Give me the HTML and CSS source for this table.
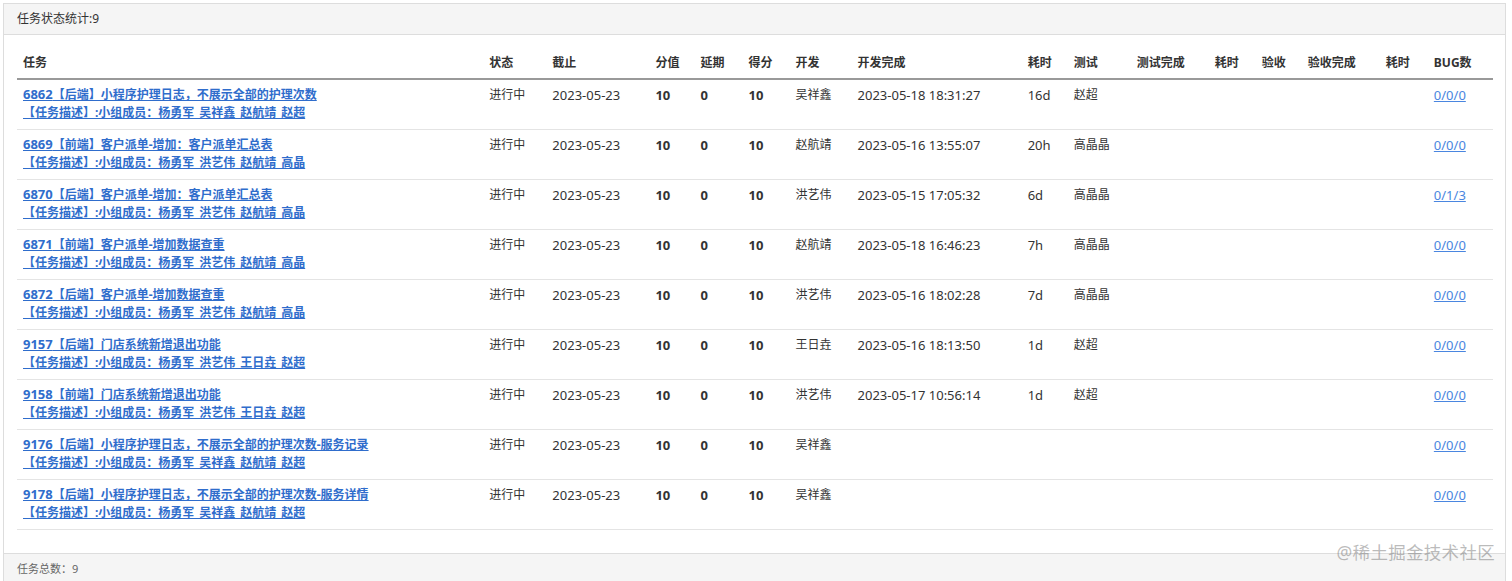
FILE: index.html
```html
<!DOCTYPE html>
<html lang="zh-CN">
<head>
<meta charset="utf-8">
<title>任务状态统计</title>
<link rel="stylesheet" href="styles.css">
</head>
<body>
<div class="panel">
  <div class="panel-heading">任务状态统计:9</div>
  <div class="panel-body">
    <table class="task-table">
      <colgroup>
        <col class="c-task"><col class="c-status"><col class="c-due"><col class="c-score">
        <col class="c-delay"><col class="c-got"><col class="c-dev"><col class="c-devdone">
        <col class="c-t1"><col class="c-test"><col class="c-testdone"><col class="c-t2">
        <col class="c-acc"><col class="c-accdone"><col class="c-t3"><col class="c-bug">
      </colgroup>
      <thead>
        <tr>
          <th>任务</th><th>状态</th><th>截止</th><th>分值</th><th>延期</th><th>得分</th><th>开发</th><th>开发完成</th>
          <th>耗时</th><th>测试</th><th>测试完成</th><th>耗时</th><th>验收</th><th>验收完成</th><th>耗时</th><th>BUG数</th>
        </tr>
      </thead>
      <tbody>
        <tr>
          <td><a class="task-link" href="#"><span class="lat">6862</span>【后端】小程序护理日志，不展示全部的护理次数</a><a class="task-link" href="#">【任务描述】:小组成员：杨勇军_吴祥鑫_赵航靖_赵超</a></td>
          <td>进行中</td><td class="lat">2023-05-23</td><td class="num">10</td><td class="num">0</td><td class="num">10</td>
          <td>吴祥鑫</td><td class="lat">2023-05-18 18:31:27</td><td class="lat">16d</td><td>赵超</td><td></td><td></td><td></td><td></td><td></td>
          <td><a class="bug-link" href="#">0/0/0</a></td>
        </tr>
        <tr>
          <td><a class="task-link" href="#"><span class="lat">6869</span>【前端】客户派单-增加：客户派单汇总表</a><a class="task-link" href="#">【任务描述】:小组成员：杨勇军_洪艺伟_赵航靖_高晶</a></td>
          <td>进行中</td><td class="lat">2023-05-23</td><td class="num">10</td><td class="num">0</td><td class="num">10</td>
          <td>赵航靖</td><td class="lat">2023-05-16 13:55:07</td><td class="lat">20h</td><td>高晶晶</td><td></td><td></td><td></td><td></td><td></td>
          <td><a class="bug-link" href="#">0/0/0</a></td>
        </tr>
        <tr>
          <td><a class="task-link" href="#"><span class="lat">6870</span>【后端】客户派单-增加：客户派单汇总表</a><a class="task-link" href="#">【任务描述】:小组成员：杨勇军_洪艺伟_赵航靖_高晶</a></td>
          <td>进行中</td><td class="lat">2023-05-23</td><td class="num">10</td><td class="num">0</td><td class="num">10</td>
          <td>洪艺伟</td><td class="lat">2023-05-15 17:05:32</td><td class="lat">6d</td><td>高晶晶</td><td></td><td></td><td></td><td></td><td></td>
          <td><a class="bug-link" href="#">0/1/3</a></td>
        </tr>
        <tr>
          <td><a class="task-link" href="#"><span class="lat">6871</span>【前端】客户派单-增加数据查重</a><a class="task-link" href="#">【任务描述】:小组成员：杨勇军_洪艺伟_赵航靖_高晶</a></td>
          <td>进行中</td><td class="lat">2023-05-23</td><td class="num">10</td><td class="num">0</td><td class="num">10</td>
          <td>赵航靖</td><td class="lat">2023-05-18 16:46:23</td><td class="lat">7h</td><td>高晶晶</td><td></td><td></td><td></td><td></td><td></td>
          <td><a class="bug-link" href="#">0/0/0</a></td>
        </tr>
        <tr>
          <td><a class="task-link" href="#"><span class="lat">6872</span>【后端】客户派单-增加数据查重</a><a class="task-link" href="#">【任务描述】:小组成员：杨勇军_洪艺伟_赵航靖_高晶</a></td>
          <td>进行中</td><td class="lat">2023-05-23</td><td class="num">10</td><td class="num">0</td><td class="num">10</td>
          <td>洪艺伟</td><td class="lat">2023-05-16 18:02:28</td><td class="lat">7d</td><td>高晶晶</td><td></td><td></td><td></td><td></td><td></td>
          <td><a class="bug-link" href="#">0/0/0</a></td>
        </tr>
        <tr>
          <td><a class="task-link" href="#"><span class="lat">9157</span>【后端】门店系统新增退出功能</a><a class="task-link" href="#">【任务描述】:小组成员：杨勇军_洪艺伟_王日垚_赵超</a></td>
          <td>进行中</td><td class="lat">2023-05-23</td><td class="num">10</td><td class="num">0</td><td class="num">10</td>
          <td>王日垚</td><td class="lat">2023-05-16 18:13:50</td><td class="lat">1d</td><td>赵超</td><td></td><td></td><td></td><td></td><td></td>
          <td><a class="bug-link" href="#">0/0/0</a></td>
        </tr>
        <tr>
          <td><a class="task-link" href="#"><span class="lat">9158</span>【前端】门店系统新增退出功能</a><a class="task-link" href="#">【任务描述】:小组成员：杨勇军_洪艺伟_王日垚_赵超</a></td>
          <td>进行中</td><td class="lat">2023-05-23</td><td class="num">10</td><td class="num">0</td><td class="num">10</td>
          <td>洪艺伟</td><td class="lat">2023-05-17 10:56:14</td><td class="lat">1d</td><td>赵超</td><td></td><td></td><td></td><td></td><td></td>
          <td><a class="bug-link" href="#">0/0/0</a></td>
        </tr>
        <tr>
          <td><a class="task-link" href="#"><span class="lat">9176</span>【后端】小程序护理日志，不展示全部的护理次数-服务记录</a><a class="task-link" href="#">【任务描述】:小组成员：杨勇军_吴祥鑫_赵航靖_赵超</a></td>
          <td>进行中</td><td class="lat">2023-05-23</td><td class="num">10</td><td class="num">0</td><td class="num">10</td>
          <td>吴祥鑫</td><td></td><td></td><td></td><td></td><td></td><td></td><td></td><td></td>
          <td><a class="bug-link" href="#">0/0/0</a></td>
        </tr>
        <tr>
          <td><a class="task-link" href="#"><span class="lat">9178</span>【后端】小程序护理日志，不展示全部的护理次数-服务详情</a><a class="task-link" href="#">【任务描述】:小组成员：杨勇军_吴祥鑫_赵航靖_赵超</a></td>
          <td>进行中</td><td class="lat">2023-05-23</td><td class="num">10</td><td class="num">0</td><td class="num">10</td>
          <td>吴祥鑫</td><td></td><td></td><td></td><td></td><td></td><td></td><td></td><td></td>
          <td><a class="bug-link" href="#">0/0/0</a></td>
        </tr>
      </tbody>
    </table>
  </div>
  <div class="panel-footer">任务总数：9</div>
  <div class="watermark">@稀土掘金技术社区</div>
</div>
</body>
</html>
```
FILE: styles.css
```css
html, body {
  margin: 0;
  padding: 0;
  background: #ffffff;
}
body {
  font-family: "Noto Sans", "Noto Sans CJK SC", sans-serif;
  font-size: 12px;
  color: #333333;
}
.lat {
  font-size: 13px;
}
.task-link .lat {
  line-height: 1;
}
.panel {
  position: relative;
  margin: 3px 6px 0 3px;
  border: 1px solid #dddddd;
  border-bottom: none;
  background: #ffffff;
}
.panel-heading {
  height: 30px;
  line-height: 30px;
  padding: 0 13px;
  background: #f5f5f5;
  border-bottom: 1px solid #dddddd;
  color: #333333;
  font-size: 12px;
}
.panel-body {
  padding: 13px 12px 23px 13px;
}
.task-table {
  width: 100%;
  table-layout: fixed;
  border-collapse: collapse;
  border-spacing: 0;
}
.c-task { width: 466px; }
.c-status { width: 63px; }
.c-due { width: 103px; }
.c-score { width: 45px; }
.c-delay { width: 48px; }
.c-got { width: 47px; }
.c-dev { width: 62px; }
.c-devdone { width: 170px; }
.c-t1 { width: 46px; }
.c-test { width: 63px; }
.c-testdone { width: 78px; }
.c-t2 { width: 47px; }
.c-acc { width: 46px; }
.c-accdone { width: 78px; }
.c-t3 { width: 48px; }
.c-bug { width: 65px; }

.task-table th {
  text-align: left;
  font-weight: bold;
  padding: 6px 6px;
  height: 18px;
  line-height: 18px;
  border-bottom: 2px solid #999999;
  white-space: nowrap;
}
.task-table td {
  vertical-align: top;
  padding: 6px 6px 7px;
  line-height: 18px;
  height: 36px;
  border-bottom: 1px solid #e4e4e4;
  white-space: nowrap;
  overflow: visible;
}
.task-table td.num {
  font-weight: bold;
  font-size: 13px;
}
.task-link {
  display: block;
  height: 18px;
  color: #2f6dcc;
  font-weight: bold;
  text-decoration: underline;
}
.bug-link {
  color: #4a86e0;
  font-size: 13px;
  text-decoration: underline;
}
.panel-footer {
  height: 30px;
  line-height: 30px;
  padding: 0 13px;
  background: #f5f5f5;
  border-top: 1px solid #dddddd;
  color: #666666;
  font-size: 11px;
}
.watermark {
  position: absolute;
  right: 10px;
  bottom: 20px;
  font-size: 17.5px;
  line-height: 24px;
  color: rgba(120, 120, 120, 0.5);
  letter-spacing: 0.3px;
}
```
